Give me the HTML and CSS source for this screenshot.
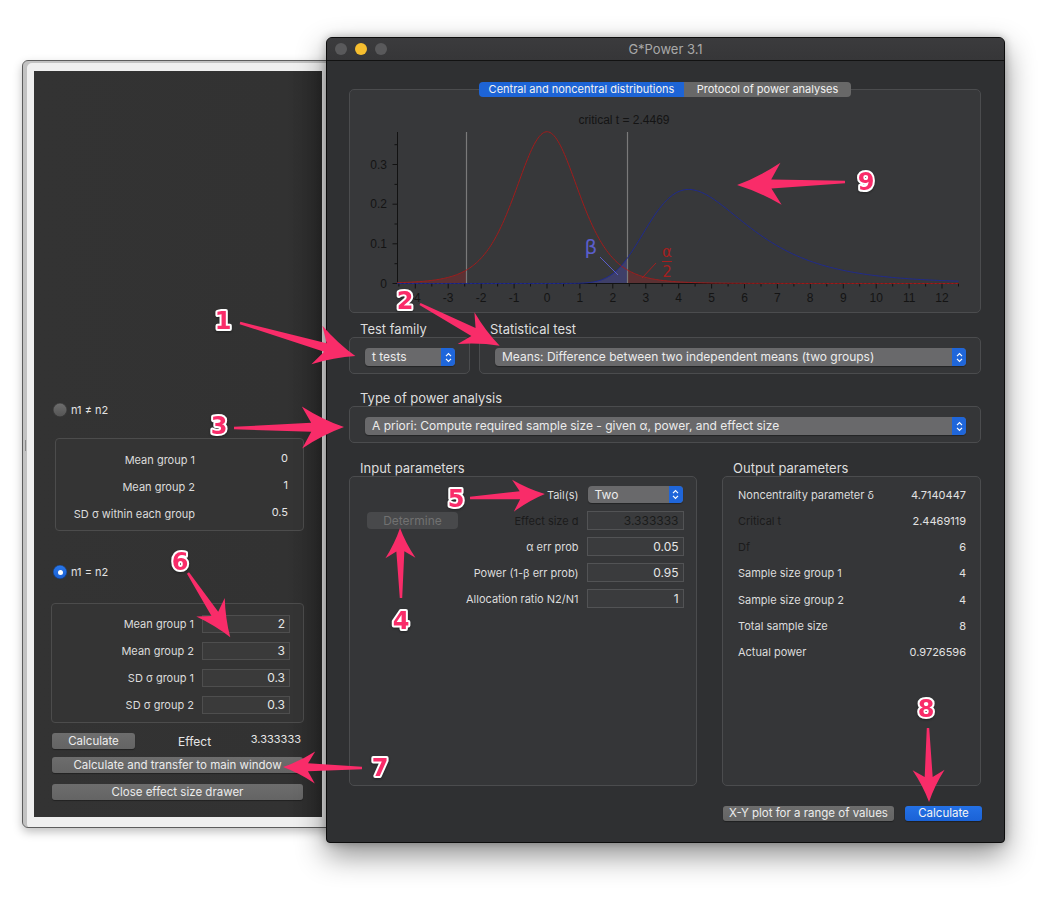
FILE: index.html
```html
<!DOCTYPE html>
<html lang="en">
<head>
<meta charset="utf-8">
<title>G*Power 3.1</title>
<link rel="stylesheet" href="styles.css">
</head>
<body>
<div class="drawer">
  <div class="drawer-inner">
    <div class="radio-row"><span class="radio"></span><span>n1 ≠ n2</span></div>
    <div class="dbox dbox-a">
      <span class="dl">Mean group 1</span><span class="dv">0</span>
      <span class="dl">Mean group 2</span><span class="dv">1</span>
      <span class="dl">SD σ within each group</span><span class="dv">0.5</span>
    </div>
    <div class="radio-row radio-row-b"><span class="radio on"></span><span>n1 = n2</span></div>
    <div class="dbox dbox-b">
      <span class="dl">Mean group 1</span><span class="field">2</span>
      <span class="dl">Mean group 2</span><span class="field">3</span>
      <span class="dl">SD σ group 1</span><span class="field">0.3</span>
      <span class="dl">SD σ group 2</span><span class="field">0.3</span>
    </div>
    <div class="calc-row">
      <span class="btn btn-calc">Calculate</span>
      <span class="eff-label">Effect</span>
      <span class="eff-val">3.333333</span>
    </div>
    <span class="btn btn-wide btn-transfer">Calculate and transfer to main window</span>
    <span class="btn btn-wide btn-close">Close effect size drawer</span>
  </div>
</div>

<div class="window">
  <div class="titlebar">
    <div class="lights"><span class="light"></span><span class="light yellow"></span><span class="light"></span></div>
    <div class="title">G*Power 3.1</div>
    <div></div>
  </div>
  <div class="wbody">
    <div class="tabs">
      <span class="tab tab-on">Central and noncentral distributions</span>
      <span class="tab tab-off">Protocol of power analyses</span>
    </div>
    <div class="gbox chartbox">
      <svg class="plot" width="630" height="222" viewBox="0 0 630 222">
        <path id="fill-red-left" class="fill-red"/>
        <path id="fill-red-right" class="fill-red"/>
        <path id="fill-blue" class="fill-blue"/>
        <line class="crit" x1="116.5" y1="42" x2="116.5" y2="193"/>
        <line class="crit" x1="277.5" y1="42" x2="277.5" y2="193"/>
        <path id="ticks" class="axis"/>
        <line class="axis" x1="47.5" y1="42" x2="47.5" y2="193.5"/>
        <line class="axis" x1="47" y1="193.5" x2="609" y2="193.5"/>
        <path id="curve-red" class="curve-red"/>
        <path id="curve-blue" class="curve-blue"/>
        <text class="ptxt" x="274" y="34" text-anchor="middle">critical t = 2.4469</text>
        <g class="ptxt" text-anchor="end">
          <text x="37" y="79">0.3</text>
          <text x="37" y="118">0.2</text>
          <text x="37" y="158">0.1</text>
          <text x="37" y="198">0</text>
        </g>
        <g class="ptxt" text-anchor="middle">
          <text x="65.3" y="212">-4</text>
          <text x="98.2" y="212">-3</text>
          <text x="131.2" y="212">-2</text>
          <text x="164.1" y="212">-1</text>
          <text x="197" y="212">0</text>
          <text x="229.9" y="212">1</text>
          <text x="262.8" y="212">2</text>
          <text x="295.8" y="212">3</text>
          <text x="328.7" y="212">4</text>
          <text x="361.6" y="212">5</text>
          <text x="394.5" y="212">6</text>
          <text x="427.4" y="212">7</text>
          <text x="460" y="212">8</text>
          <text x="493.3" y="212">9</text>
          <text x="526.2" y="212">10</text>
          <text x="559.3" y="212">11</text>
          <text x="592" y="212">12</text>
        </g>
        <text class="beta" x="241" y="164" text-anchor="middle">β</text>
        <line class="beta-line" x1="250" y1="167" x2="268" y2="185"/>
        <text class="alpha" x="317" y="167" text-anchor="middle">α</text>
        <line class="alpha-line" x1="312" y1="171.5" x2="322" y2="171.5"/>
        <text class="alpha" x="317" y="187" text-anchor="middle">2</text>
        <line class="alpha-line" x1="306" y1="173" x2="292" y2="188"/>
      </svg>
    </div>

    <div class="row-two">
      <div class="grp">
        <div class="glabel">Test family</div>
        <div class="gbox selbox">
          <div class="select"><span class="sel-text">t tests</span><span class="step"><svg width="7" height="11" viewBox="0 0 7 11"><path d="M1 4.2 3.5 1.7 6 4.2M1 6.8 3.5 9.3 6 6.8"/></svg></span></div>
        </div>
      </div>
      <div class="grp">
        <div class="glabel">Statistical test</div>
        <div class="gbox selbox">
          <div class="select"><span class="sel-text">Means: Difference between two independent means (two groups)</span><span class="step"><svg width="7" height="11" viewBox="0 0 7 11"><path d="M1 4.2 3.5 1.7 6 4.2M1 6.8 3.5 9.3 6 6.8"/></svg></span></div>
        </div>
      </div>
    </div>

    <div class="grp grp-type">
      <div class="glabel">Type of power analysis</div>
      <div class="gbox selbox">
        <div class="select"><span class="sel-text">A priori: Compute required sample size - given α, power, and effect size</span><span class="step"><svg width="7" height="11" viewBox="0 0 7 11"><path d="M1 4.2 3.5 1.7 6 4.2M1 6.8 3.5 9.3 6 6.8"/></svg></span></div>
      </div>
    </div>

    <div class="row-params">
      <div class="grp">
        <div class="glabel">Input parameters</div>
        <div class="gbox inbox">
          <span></span><span class="il">Tail(s)</span>
          <div class="select select-sm"><span class="sel-text">Two</span><span class="step"><svg width="7" height="11" viewBox="0 0 7 11"><path d="M1 4.2 3.5 1.7 6 4.2M1 6.8 3.5 9.3 6 6.8"/></svg></span></div>
          <span class="btn-determine">Determine</span><span class="il dark">Effect size d</span><span class="field ifield dark">3.333333</span>
          <span></span><span class="il">α err prob</span><span class="field ifield">0.05</span>
          <span></span><span class="il">Power (1-β err prob)</span><span class="field ifield">0.95</span>
          <span></span><span class="il">Allocation ratio N2/N1</span><span class="field ifield">1</span>
        </div>
      </div>
      <div class="grp">
        <div class="glabel">Output parameters</div>
        <div class="gbox outbox">
          <span class="ol">Noncentrality parameter δ</span><span class="ov">4.7140447</span>
          <span class="ol dark">Critical t</span><span class="ov">2.4469119</span>
          <span class="ol dark">Df</span><span class="ov">6</span>
          <span class="ol">Sample size group 1</span><span class="ov">4</span>
          <span class="ol">Sample size group 2</span><span class="ov">4</span>
          <span class="ol">Total sample size</span><span class="ov">8</span>
          <span class="ol">Actual power</span><span class="ov">0.9726596</span>
        </div>
      </div>
    </div>

    <div class="actions">
      <span class="btn btn-xy">X-Y plot for a range of values</span>
      <span class="btn btn-blue">Calculate</span>
    </div>
  </div>
</div>

<svg class="annot" width="1060" height="917" viewBox="0 0 1060 917">
  <g class="arrows">
    <path transform="translate(240,323) rotate(16)" d="M0,-1.2L88.8,-4.5L80,-20Q100,-7 120,0Q100,7 80,20L88.8,4.5L0,1.2Z"/>
    <path transform="translate(420,304) rotate(27.7)" d="M0,-1.2L60.4,-4.5L52,-18Q71,-6.3 90,0Q71,6.3 52,18L60.4,4.5L0,1.2Z"/>
    <path transform="translate(234,428) rotate(-0.5)" d="M0,-1.2L77.2,-4.5L68,-21Q89,-7.4 110,0Q89,7.4 68,21L77.2,4.5L0,1.2Z"/>
    <path transform="translate(401,598) rotate(-90.8)" d="M0,-1.2L46.6,-4L40,-15Q55,-5.3 70,0Q55,5.3 40,15L46.6,4L0,1.2Z"/>
    <path transform="translate(470,498) rotate(-3.1)" d="M0,-1.2L50,-4L43,-16Q59,-5.6 75,0Q59,5.6 43,16L50,4L0,1.2Z"/>
    <path transform="translate(188,573) rotate(56.7)" d="M0,-1.2L48.9,-4L41,-17Q59,-6 77,0Q59,6 41,17L48.9,4L0,1.2Z"/>
    <path transform="translate(362,768) rotate(180.7)" d="M0,-1.2L54,-4L47,-16Q63,-5.6 79,0Q63,5.6 47,16L54,4L0,1.2Z"/>
    <path transform="translate(928,728) rotate(89.2)" d="M0,-1.2L49,-4L42,-16Q58,-5.6 74,0Q58,5.6 42,16L49,4L0,1.2Z"/>
    <path transform="translate(845,182) rotate(178.4)" d="M0,-1.2L73.7,-4.5L64,-21Q86,-7.4 108,0Q86,7.4 64,21L73.7,4.5L0,1.2Z"/>
  </g>
  <g class="nums">
    <text x="223" y="329">1</text>
    <text x="405" y="309">2</text>
    <text x="219" y="434">3</text>
    <text x="401" y="629">4</text>
    <text x="456" y="507">5</text>
    <text x="180" y="570">6</text>
    <text x="380" y="776">7</text>
    <text x="926" y="717">8</text>
    <text x="866" y="190">9</text>
  </g>
</svg>

<script src="script.js"></script>
</body>
</html>
```

FILE: styles.css
```css
* { box-sizing: border-box; margin: 0; padding: 0; }
html, body { width: 1060px; height: 917px; overflow: hidden; }
body {
  background: #ffffff;
  font-family: Inter, "Noto Sans", sans-serif;
  position: relative;
  color: #dedede;
}

/* ---------- drawer ---------- */
.drawer {
  position: absolute;
  left: 22px;
  top: 60px;
  width: 310px;
  height: 768px;
  border: 1px solid #5c5c5c;
  border-radius: 6px 0 0 6px;
  background: #efefef;
  padding: 10px 0 0 11px;
  box-shadow: inset 4px 2px 0 #c2c2c2, 0 4px 10px rgba(0, 0, 0, .25);
}
.drawer::before {
  content: "";
  position: absolute;
  left: 2px;
  top: 379px;
  width: 1px;
  height: 11px;
  background: #8a8a8a;
}
.drawer-inner {
  width: 288px;
  height: 746px;
  background: linear-gradient(to right, #333333 0%, #323232 88%, #2a2a2a 100%);
  padding: 331px 18px 0 17px;
  display: flex;
  flex-direction: column;
  font-size: 11px;
  color: #dcdcdc;
}
.radio-row {
  display: flex;
  align-items: center;
  gap: 4px;
  height: 16px;
  margin-left: 2px;
  font-size: 11px;
  color: #e2e2e2;
}
.radio-row-b { margin-top: 33px; }
.radio {
  width: 14px;
  height: 14px;
  border-radius: 50%;
  background: linear-gradient(#6e6e6e, #545454);
  box-shadow: inset 0 0 0 .5px rgba(0,0,0,.4);
}
.radio.on {
  background: linear-gradient(#2a78ec, #1a5fd0);
  display: flex;
  align-items: center;
  justify-content: center;
}
.radio.on::after {
  content: "";
  width: 5px;
  height: 5px;
  border-radius: 50%;
  background: #fff;
}
.dbox {
  border: 1px solid #4c4c4c;
  border-radius: 4px;
  background: #343434;
  display: grid;
}
.dbox-a {
  margin-top: 20px;
  margin-left: 4px;
  height: 93px;
  grid-template-columns: 139px 1fr;
  grid-auto-rows: 27px;
  padding: 7px 15px 0 0;
  align-items: center;
}
.dl { text-align: right; white-space: nowrap; color: #dcdcdc; }
.dv { text-align: right; position: relative; top: -2px; color: #e6e6e6; }
.dbox-b {
  margin-top: 23px;
  height: 120px;
  grid-template-columns: 142px 88px;
  column-gap: 8px;
  grid-auto-rows: 18px;
  row-gap: 9px;
  padding: 11px 0 0 0;
  align-items: center;
}
.field {
  height: 18px;
  line-height: 16px;
  border: 1px solid #4e4e4e;
  background: #3a3a3a;
  text-align: right;
  padding-right: 4px;
  font-size: 12px;
  color: #e6e6e6;
}
.calc-row {
  margin-top: 10px;
  height: 16px;
  display: flex;
  align-items: center;
}
.btn {
  display: block;
  height: 16px;
  line-height: 16px;
  border-radius: 3px;
  background: linear-gradient(#6d6d6d, #646464);
  color: #ececec;
  font-size: 11px;
  text-align: center;
  white-space: nowrap;
  box-shadow: 0 1px 1px rgba(0,0,0,.35);
}
.btn-calc { width: 83px; margin-left: 1px; font-size: 11.5px; }
.eff-label { margin-left: 43px; font-size: 12px; color: #e6e6e6; }
.eff-val { margin-left: auto; margin-right: 3px; position: relative; top: -2px; font-size: 11px; color: #e6e6e6; }
.btn-wide { margin: 0 1px; font-size: 11.5px; }
.btn-transfer { margin-top: 8px; }
.btn-close { margin-top: 11px; }

/* ---------- main window ---------- */
.window {
  position: absolute;
  left: 326px;
  top: 37px;
  width: 679px;
  height: 806px;
  border: 1px solid #0c0c0c;
  border-radius: 6px 6px 4px 4px;
  background: #2f3032;
  box-shadow: 0 12px 30px rgba(0, 0, 0, .45), 0 0 8px rgba(0,0,0,.25);
  overflow: hidden;
  display: flex;
  flex-direction: column;
}
.titlebar {
  flex: none;
  height: 23px;
  background: linear-gradient(#3b3b3d, #363638);
  border-bottom: 1px solid #121212;
  display: grid;
  grid-template-columns: 1fr auto 1fr;
  align-items: center;
}
.lights { display: flex; gap: 8px; padding-left: 8px; }
.light {
  width: 12px;
  height: 12px;
  border-radius: 50%;
  background: #59595b;
}
.light.yellow { background: #f6be2f; }
.title { font-size: 13px; color: #a9a9a9; }
.wbody {
  flex: 1;
  padding: 21px 23px 0 22px;
  display: flex;
  flex-direction: column;
}
.tabs {
  display: flex;
  justify-content: center;
  height: 15px;
  margin-bottom: -8px;
  position: relative;
  z-index: 1;
}
.tab {
  height: 15px;
  line-height: 15px;
  font-size: 11px;
  color: #f2f2f2;
  text-align: center;
  white-space: nowrap;
}
.tab-on { width: 205px; background: #1d64d6; border-radius: 4px 0 0 4px; }
.tab-off { width: 167px; background: #686868; border-radius: 0 4px 4px 0; }

.gbox {
  border: 1px solid #4b4c4e;
  border-radius: 5px;
  background: #353638;
}
.chartbox { height: 224px; background: #37383a; }
.plot { display: block; }
.axis { stroke: #121212; stroke-width: 1; fill: none; }
.crit { stroke: #7a7a7a; stroke-width: 1.2; }
.curve-red { fill: none; stroke: #a11c1c; stroke-width: 1; }
.curve-blue { fill: none; stroke: #1f2a90; stroke-width: 1; }
.fill-red { fill: rgba(150, 40, 40, .38); }
.fill-blue { fill: rgba(72, 74, 165, .45); }
.ptxt { font-family: "Liberation Sans", Arial, sans-serif; font-size: 12px; fill: #141414; }
.beta { font-family: "DejaVu Sans", sans-serif; font-size: 20px; fill: #5a5ecb; }
.beta-line { stroke: #5a5ecb; stroke-width: 1; }
.alpha { font-family: "DejaVu Sans", sans-serif; font-size: 15px; fill: #a51f1f; }
.alpha-line { stroke: #a51f1f; stroke-width: 1; }

.glabel {
  height: 16px;
  line-height: 16px;
  font-size: 13px;
  color: #dedede;
  padding-left: 11px;
  white-space: nowrap;
}
.row-two {
  margin-top: 8px;
  display: grid;
  grid-template-columns: 121px 1fr;
  column-gap: 9px;
}
.grp-type { margin-top: 16px; }
.selbox { height: 37px; padding: 10px 14px 0 15px; }
.select {
  display: flex;
  height: 18px;
  border-radius: 4px;
  background: #69696b;
  overflow: hidden;
  box-shadow: 0 1px 1px rgba(0,0,0,.35);
}
.sel-text {
  flex: 1;
  padding-left: 7px;
  font-size: 12px;
  line-height: 18px;
  color: #ececec;
  white-space: nowrap;
  overflow: hidden;
}
.step {
  flex: none;
  width: 14px;
  background: #1f66da;
  display: flex;
  align-items: center;
  justify-content: center;
}
.step svg path { fill: none; stroke: #fff; stroke-width: 1.2; }

.row-params {
  margin-top: 17px;
  display: grid;
  grid-template-columns: 348px 1fr;
  column-gap: 25px;
}
.inbox {
  height: 310px;
  display: grid;
  grid-template-columns: 91px 1fr 97px;
  grid-auto-rows: 19px;
  row-gap: 7px;
  column-gap: 8px;
  padding: 8px 13px 0 17px;
  align-items: center;
  align-content: start;
}
.il { text-align: right; font-size: 11px; color: #dcdcdc; white-space: nowrap; }
.dark { color: #1b1b1b; }
.select-sm { height: 17px; margin-left: 1px; margin-right: 1px; }
.select-sm .sel-text { line-height: 17px; font-size: 12px; padding-left: 7px; }
.btn-determine {
  height: 17px;
  line-height: 17px;
  border-radius: 4px;
  background: #48494b;
  color: #717171;
  font-size: 12px;
  text-align: center;
}
.ifield {
  height: 19px;
  line-height: 17px;
  background: #3a3b3d;
  border-color: #525355;
}
.ifield.dark { color: #1b1b1b; }
.outbox {
  height: 310px;
  display: grid;
  grid-template-columns: 1fr auto;
  grid-auto-rows: 19px;
  row-gap: 7.33px;
  padding: 8px 14px 0 15px;
  align-items: center;
  align-content: start;
  font-size: 11px;
}
.ol { white-space: nowrap; color: #dcdcdc; }
.ol.dark { color: #1b1b1b; }
.ov { text-align: right; color: #e2e2e2; }

.actions {
  margin-top: 20px;
  display: flex;
  justify-content: flex-end;
  gap: 11px;
  margin-right: -1px;
}
.actions .btn { height: 15px; line-height: 15px; font-size: 11.5px; }
.btn-xy { width: 171px; }
.btn-blue { width: 77px; background: linear-gradient(#2471e6, #1b62d6); color: #f4f4f4; }

/* ---------- annotations ---------- */
.annot {
  position: absolute;
  left: 0;
  top: 0;
  z-index: 10;
  pointer-events: none;
}
.arrows path { fill: #f92c69; }
.nums text {
  font-family: "DejaVu Sans", sans-serif;
  font-weight: bold;
  font-size: 24px;
  text-anchor: middle;
  fill: #f92c69;
  stroke: #ffffff;
  stroke-width: 4px;
  stroke-linejoin: round;
  paint-order: stroke;
  filter: drop-shadow(0 1px 1px rgba(0,0,0,.35));
}
```

FILE: script.js
```js
(function () {
  var X0 = 197, SX = 32.92, Y0 = 193.5, SY = 396.5;
  var T0 = -4.55, T1 = 12.5, CRIT = 2.4469, NCP = 4.7140447;

  function px(t) { return X0 + SX * t; }
  function py(p) { return Y0 - SY * p; }

  function central(t) { return 0.3827328 * Math.pow(1 + t * t / 6, -3.5); }

  function noncentral(t) {
    var n = 900, vmax = 60, h = vmax / n, s = 0;
    for (var i = 0; i < n; i++) {
      var v = (i + 0.5) * h, q = Math.sqrt(v / 6), z = t * q - NCP;
      s += Math.exp(-z * z / 2) * q * v * v * Math.exp(-v / 2);
    }
    return s * h / (16 * Math.sqrt(2 * Math.PI));
  }

  function curve(f, a, b) {
    var n = Math.max(2, Math.round((b - a) / 0.04)), d = '';
    for (var i = 0; i <= n; i++) {
      var t = a + (b - a) * i / n;
      d += (i ? 'L' : 'M') + px(t).toFixed(2) + ',' + py(f(t)).toFixed(2);
    }
    return d;
  }

  function area(f, a, b) {
    return curve(f, a, b) + 'L' + px(b).toFixed(2) + ',' + Y0 + 'L' + px(a).toFixed(2) + ',' + Y0 + 'Z';
  }

  function set(id, d) {
    var el = document.getElementById(id);
    if (el) el.setAttribute('d', d);
  }

  set('fill-red-left', area(central, T0, -CRIT));
  set('fill-red-right', area(central, CRIT, T1));
  set('fill-blue', area(noncentral, T0, CRIT));
  set('curve-red', curve(central, T0, T1));
  set('curve-blue', curve(noncentral, T0, T1));

  var ticks = '';
  for (var k = -9; k <= 25; k++) {
    ticks += 'M' + px(k / 2).toFixed(1) + ',' + Y0 + 'v' + (k % 2 === 0 ? 5 : 3);
  }
  for (var j = 0; j <= 7; j++) {
    ticks += 'M47.5,' + py(j * 0.05).toFixed(1) + 'h' + (j % 2 === 0 ? -5 : -3);
  }
  set('ticks', ticks);
})();
```
